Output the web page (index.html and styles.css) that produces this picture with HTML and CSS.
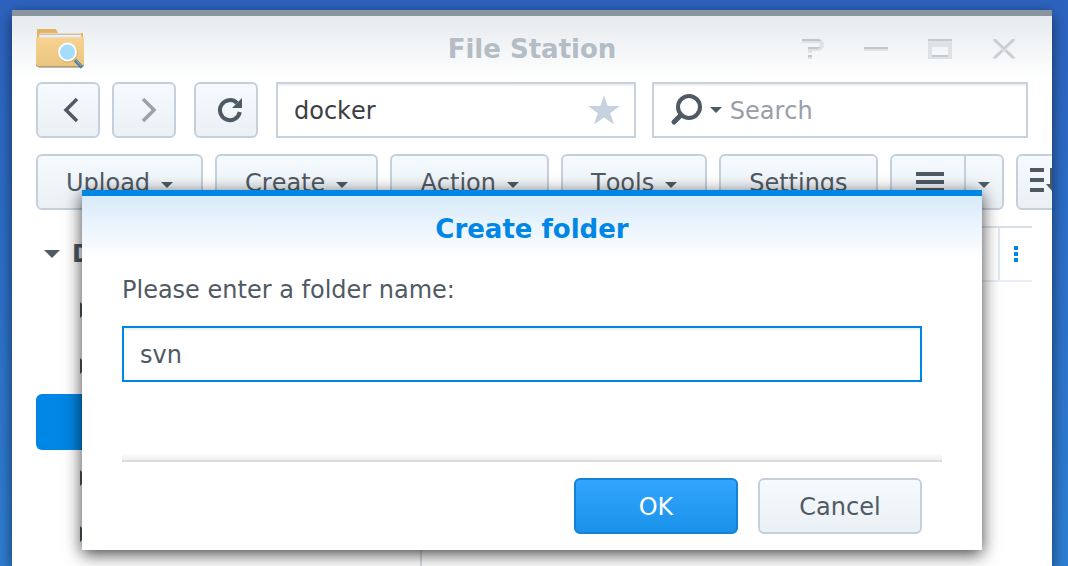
FILE: index.html
```html
<!DOCTYPE html>
<html lang="en">
<head>
<meta charset="utf-8">
<title>File Station</title>
<link rel="stylesheet" href="styles.css">
</head>
<body>
<main class="window">
  <header class="titlebar">
    <svg class="app-icon" width="48" height="44" viewBox="0 1 48 44" aria-hidden="true">
      <defs>
        <linearGradient id="folder" x1="0" y1="0" x2="0" y2="1">
          <stop offset="0" stop-color="#f8d291"/><stop offset="1" stop-color="#eac57f"/>
        </linearGradient>
      </defs>
      <path d="M2 40h44l-1 2H3z" fill="#9da3aa" opacity=".7"/>
      <path d="M1 3h19l2 4h25v10H1z" fill="#e3b465"/>
      <path d="M4 7.500h40.500v3H3z" fill="#fff"/>
      <path d="M3.500 9.500h42v3H3z" fill="#e8e9ee"/>
      <path d="M4 8.500h40" stroke="#c3bcb4" stroke-width="1"/>
      <path d="M0 11.500h48v27a2 2 0 0 1-2 2H2a2 2 0 0 1-2-2z" fill="url(#folder)"/>
      <path d="M0 38.500a2 2 0 0 0 2 2h44a2 2 0 0 0 2-2" fill="none" stroke="#b89a68" stroke-width="1"/>
      <path d="M39 34l7 7.500" stroke="#557f9b" stroke-width="3.500"/>
      <path d="M39.500 33.500l6 6.500" stroke="#8fb4cb" stroke-width="1"/>
      <circle cx="32" cy="27" r="9.800" fill="#b98f4c" opacity=".4"/>
      <circle cx="31.500" cy="26" r="8.500" fill="#a4dcfb" stroke="#fbfaf5" stroke-width="2"/>
    </svg>
    <h1 class="titlebar-text">File Station</h1>
    <div class="window-controls">
      <button class="window-control" aria-label="Help">
        <svg width="24" height="20" viewBox="0 0 24 20"><path d="M2 0h16a6 6 0 0 1 6 6a6 6 0 0 1-6 6h-6v2H8V8h10a2 2 0 0 0 0-4H2zM8 16h4v4H8z" fill="#dfe2e5"/><path d="M2 0h16a6 6 0 0 1 4 2H2zM8 8h12l-2 2H8zM8 16h4v2H8z" fill="#c3c7cb"/></svg>
      </button>
      <button class="window-control" aria-label="Minimize">
        <svg width="24" height="20" viewBox="0 0 24 20"><path d="M0 8h24v4H0z" fill="#e1e3e6"/><path d="M0 8h24v2H0z" fill="#c3c7cb"/></svg>
      </button>
      <button class="window-control" aria-label="Maximize">
        <svg width="24" height="20" viewBox="0 0 24 20"><path d="M0 0h24v20H0zM4 8v10h16V8z" fill="#dfe2e5" fill-rule="evenodd"/><path d="M0 0h24v2H0zM4 16h16v2H4z" fill="#c6cace"/></svg>
      </button>
      <button class="window-control" aria-label="Close">
        <svg width="24" height="20" viewBox="0 0 24 20"><path d="M1.500 0L22.500 20M22.500 0L1.500 20" stroke="#d9dce0" stroke-width="3.500"/><path d="M2 0l10 9.500L22 0M3 18.500l7-7M21 18.500l-7-7" fill="none" stroke="#c3c7cb" stroke-width="1.500"/></svg>
      </button>
    </div>
  </header>

  <div class="navbar">
    <button class="button button-nav" aria-label="Back">
      <svg width="24" height="28" viewBox="0 0 24 28"><path d="M17 3L6 14l11 11" fill="none" stroke="#505a64" stroke-width="3.500"/></svg>
    </button>
    <button class="button button-nav" aria-label="Forward">
      <svg width="24" height="28" viewBox="0 0 24 28"><path d="M7 3l11 11L7 25" fill="none" stroke="#9ba1aa" stroke-width="3.500"/></svg>
    </button>
    <button class="button button-nav button-refresh" aria-label="Refresh">
      <svg width="26" height="28" viewBox="0 0 26 28"><path d="M22.800 16A10 10 0 1 1 20 7" fill="none" stroke="#505a64" stroke-width="4"/><path d="M25 2v10H15z" fill="#505a64"/></svg>
    </button>
    <div class="field field-path">
      <input class="field-input" type="text" value="docker" aria-label="Path">
      <svg width="32" height="30" viewBox="0 0 32 30" aria-hidden="true"><path d="M16 0l3.700 11.100H32l-9.700 7.200L26 29.500l-10-7-10 7 3.700-11.200L0 11.100h12.300z" fill="#c6d3df"/></svg>
    </div>
    <div class="field field-search">
      <svg width="32" height="32" viewBox="0 0 32 32" aria-hidden="true"><circle cx="19" cy="13" r="11" fill="none" stroke="#505a64" stroke-width="4"/><path d="M11 21l-7 7" stroke="#505a64" stroke-width="5" stroke-linecap="round"/></svg>
      <span class="caret"></span>
      <input class="field-input" type="search" placeholder="Search" aria-label="Search">
    </div>
  </div>

  <div class="toolbar">
    <button class="button">Upload<span class="caret"></span></button>
    <button class="button">Create<span class="caret"></span></button>
    <button class="button">Action<span class="caret"></span></button>
    <button class="button">Tools<span class="caret"></span></button>
    <button class="button">Settings</button>
    <div class="split">
      <button class="button split-main" aria-label="List view">
        <svg width="28" height="20" viewBox="0 0 28 20"><path d="M0 0h28v4H0zM0 8h28v4H0zM0 16h28v4H0z" fill="#505a64"/></svg>
      </button>
      <button class="button split-more" aria-label="View options"><span class="caret"></span></button>
    </div>
    <button class="button button-sort" aria-label="Sort">
      <svg width="28" height="28" viewBox="0 0 28 28"><path d="M0 0h14v4H0zM0 10h14v4H0zM0 20h14v4H0zM20 0h4v16h4l-6 7-6-7h4z" fill="#505a64"/></svg>
    </button>
  </div>

  <div class="content">
    <nav class="tree" aria-label="Folders">
      <div class="tree-row tree-root"><span class="arrow-down"></span>D</div>
      <div class="tree-row"><span class="arrow-right"></span></div>
      <div class="tree-row"><span class="arrow-right"></span></div>
      <div class="tree-row tree-selected"></div>
      <div class="tree-row"><span class="arrow-right"></span></div>
      <div class="tree-row"><span class="arrow-right"></span></div>
    </nav>
    <section class="files">
      <div class="files-head">
        <button class="columns-button" aria-label="Columns">
          <svg width="4" height="16" viewBox="0 0 4 16"><path d="M0 0h4v4H0zM0 6h4v4H0zM0 12h4v4H0z" fill="#0086e5"/></svg>
        </button>
      </div>
    </section>
  </div>

  <form class="dialog" role="dialog" aria-labelledby="dialog-title">
    <h2 class="dialog-title" id="dialog-title">Create folder</h2>
    <div class="dialog-body">
      <label class="dialog-label" for="folder-name">Please enter a folder name:</label>
      <input class="dialog-input" id="folder-name" type="text" value="svn">
    </div>
    <div class="dialog-rule"></div>
    <div class="dialog-actions">
      <button class="button button-primary" type="button">OK</button>
      <button class="button" type="button">Cancel</button>
    </div>
  </form>
</main>
</body>
</html>
```
FILE: styles.css
```css
* {
  box-sizing: border-box;
}

body {
  margin: 0;
  min-height: 100vh;
  display: flex;
  padding: 10px 16px 0 12px;
  overflow: hidden;
  background: linear-gradient(#2d63c0, #2e7fd3);
  color: #505a64;
  font: 24px/32px "DejaVu Sans", Verdana, sans-serif;
  font-kerning: none;
}

button,
input {
  font: inherit;
  font-kerning: none;
  color: inherit;
  margin: 0;
}

.window {
  position: relative;
  display: flex;
  flex-direction: column;
  flex: 1;
  min-width: 0;
  border-top: 6px solid #8b95a0;
  background: #fff;
  box-shadow: 0 4px 14px rgba(0, 0, 0, 0.55);
}

.titlebar {
  display: grid;
  grid-template-columns: 1fr auto 1fr;
  align-items: center;
  height: 66px;
  padding: 0 16px 0 24px;
  background: linear-gradient(#e6eaee, #fff 62px);
}

.titlebar-text {
  margin: 0;
  padding-right: 8px;
  font-size: 26px;
  line-height: 32px;
  color: #b4bcc5;
}

.window-controls {
  display: flex;
  justify-content: flex-end;
}

.window-control {
  display: flex;
  justify-content: center;
  align-items: center;
  width: 64px;
  height: 36px;
  padding: 0;
  border: 0;
  background: none;
}

.navbar {
  display: flex;
  gap: 12px;
  padding: 0 24px;
}

.button {
  display: flex;
  flex: none;
  justify-content: center;
  align-items: center;
  height: 56px;
  padding: 2px 28px 0;
  border: 2px solid #c6d0dd;
  border-radius: 6px;
  background: linear-gradient(#f5faff, #ebf0f5);
  white-space: nowrap;
}

.button-nav {
  width: 64px;
  padding: 0 0 0 8px;
}

.button-refresh {
  margin-left: 6px;
}

.field {
  display: flex;
  align-items: center;
  min-width: 0;
  height: 56px;
  border: 2px solid #c6d3df;
  background: #fff;
  box-shadow: inset 0 2px #f0f0f0;
}

.field-path {
  flex: 360;
  margin-left: 6px;
  padding: 0 14px 0 16px;
}

.field-search {
  flex: 376;
  gap: 8px;
  margin-left: 4px;
  padding: 0 16px;
}

.field-input {
  flex: 1;
  min-width: 0;
  padding: 2px 0 0;
  border: 0;
  outline: 0;
  background: none;
  appearance: none;
}

.field-path .field-input {
  color: #3b3e42;
}

.field-input::placeholder {
  color: #96a0aa;
  opacity: 1;
}

.caret {
  border: 6px solid transparent;
  border-top-color: #505a64;
  border-bottom: 0;
}

.toolbar {
  display: flex;
  gap: 12px;
  padding: 16px 0 16px 24px;
  overflow: hidden;
}

.toolbar .button .caret {
  margin: 4px 0 0 11px;
}

.split {
  display: flex;
  flex: none;
}

.split-main {
  width: 76px;
  padding: 0 0 0 4px;
  border-radius: 6px 0 0 6px;
}

.toolbar .split-more {
  width: 38px;
  padding: 2px 0 0;
  border-left: 0;
  border-radius: 0 6px 6px 0;
}

.toolbar .split-more .caret {
  margin-left: 0;
}

.button-sort {
  padding: 0 12px;
}

.content {
  display: flex;
  flex: 1;
  padding: 0 20px 0 24px;
}

.tree {
  width: 386px;
  border-right: 2px solid #d5dde5;
}

.tree-row {
  display: flex;
  align-items: center;
  height: 56px;
  margin-right: 20px;
  padding-left: 44px;
  border-radius: 6px;
}

.tree-root {
  gap: 12px;
  padding-left: 8px;
  font-weight: bold;
}

.tree-selected {
  background: #0086e5;
}

.arrow-down {
  border: 8px solid transparent;
  border-top-color: #505a64;
  border-bottom: 0;
}

.arrow-right {
  border: 8px solid transparent;
  border-left-color: #505a64;
  border-right: 0;
}

.files {
  flex: 1;
}

.files-head {
  display: flex;
  justify-content: flex-end;
  height: 56px;
  border-top: 2px solid #d8e1ea;
  border-bottom: 2px solid #e8eef3;
}

.columns-button {
  display: flex;
  justify-content: center;
  align-items: center;
  width: 34px;
  padding: 0;
  border: 0;
  border-left: 2px solid #dfe8f0;
  background: none;
}

.dialog {
  position: absolute;
  top: 174px;
  left: 70px;
  right: 70px;
  border-top: 6px solid #0086e5;
  background: #fff;
  box-shadow: 0 4px 16px rgba(0, 0, 0, 0.75);
}

.dialog-title {
  margin: 0;
  padding: 17px 0 15px;
  background: linear-gradient(#d8ebfa, #fff);
  color: #0086e5;
  font-size: 26px;
  line-height: 32px;
  text-align: center;
}

.dialog-body {
  display: flex;
  flex-direction: column;
  gap: 20px;
  padding: 14px 60px 68px 40px;
}

.dialog-input {
  height: 56px;
  padding: 2px 16px 0;
  border: 2px solid #0086e5;
  outline: 0;
  background: #fff;
  box-shadow: inset 0 2px #f0f0f0;
}

.dialog-rule {
  height: 12px;
  margin: 0 40px;
  border-bottom: 2px solid #dcdcdc;
  background: linear-gradient(#fff 30%, #efefef);
}

.dialog-actions {
  display: flex;
  justify-content: flex-end;
  gap: 20px;
  padding: 16px 60px;
}

.dialog-actions .button {
  width: 164px;
}

.dialog-actions .button-primary {
  border-color: #1582d9;
  background: linear-gradient(#33a5ff, #1a92ea);
  color: #fff;
}
```
